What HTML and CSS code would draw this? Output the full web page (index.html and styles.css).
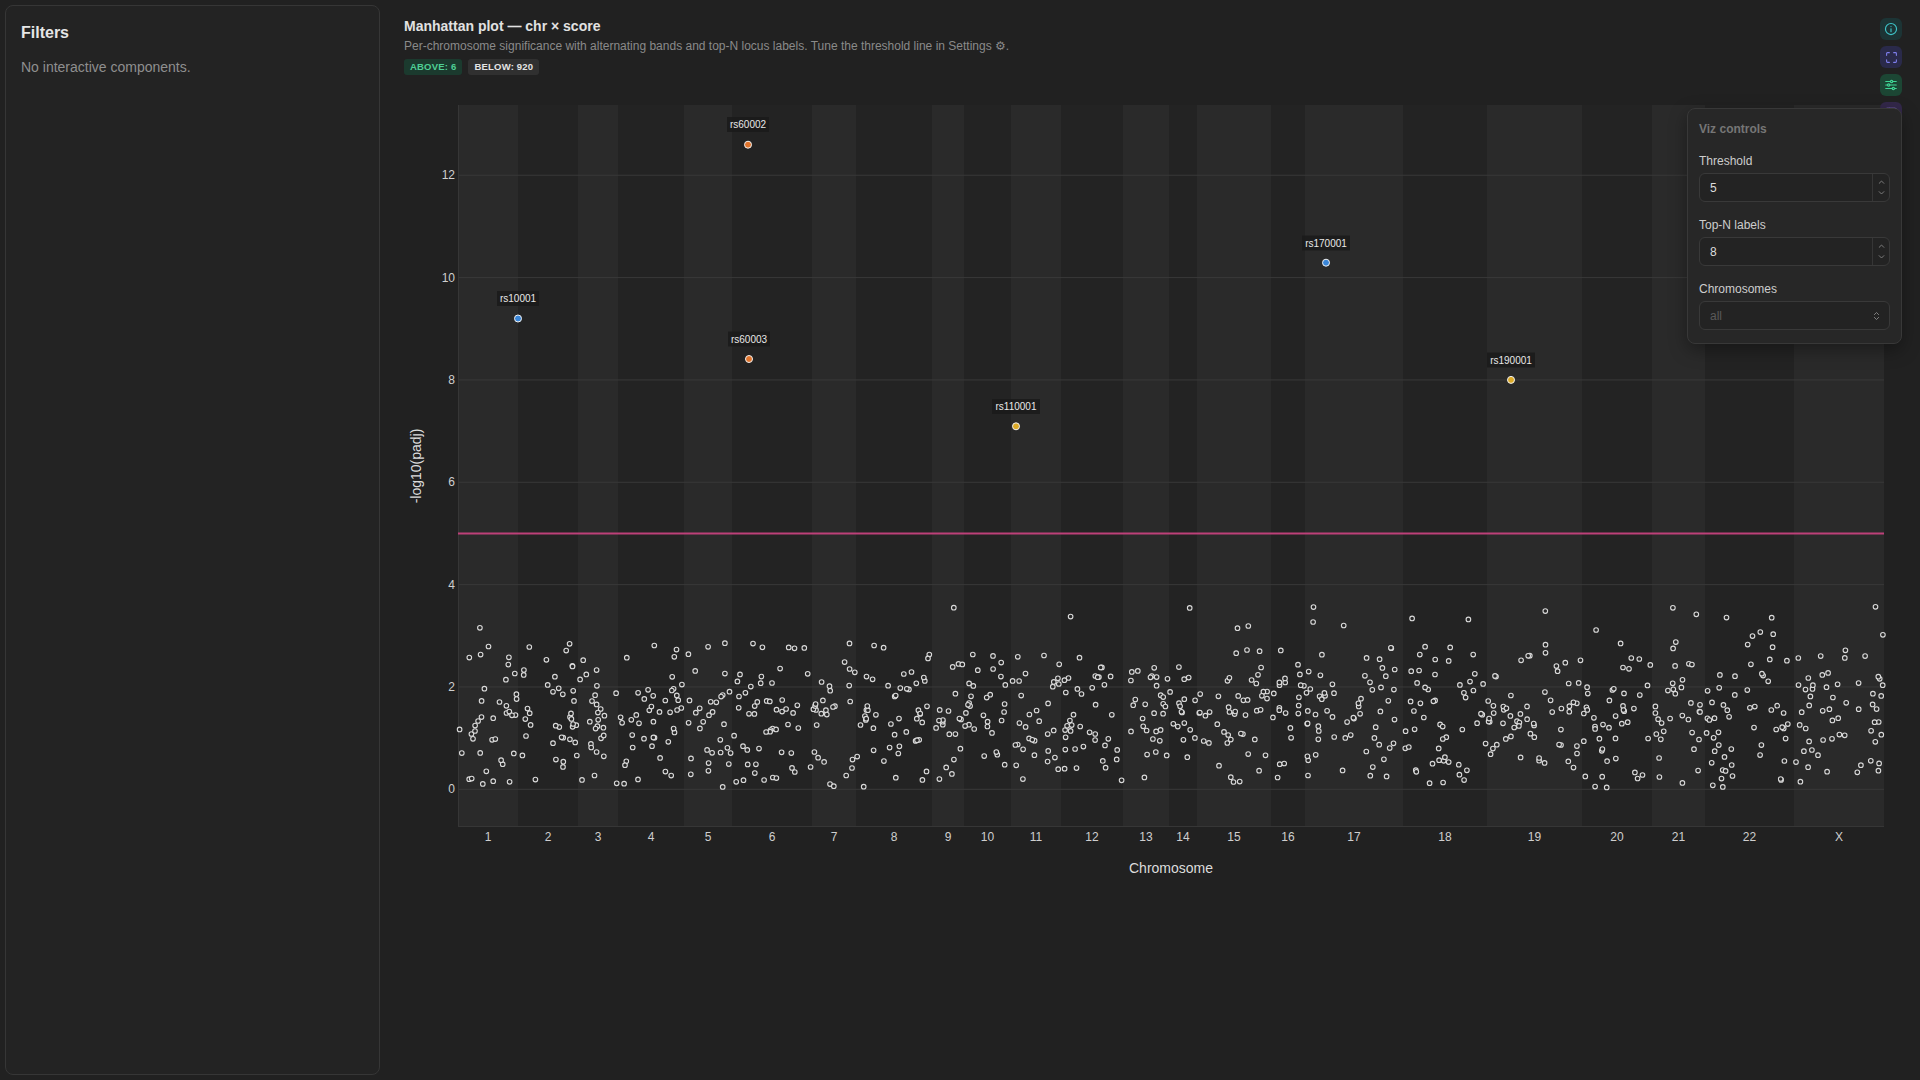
FILE: index.html
```html
<!DOCTYPE html>
<html lang="en">
<head>
<meta charset="utf-8">
<title>Manhattan plot</title>
<link rel="stylesheet" href="styles.css">
</head>
<body>
<div class="app">
  <aside class="sidebar">
    <h2 class="sidebar-title">Filters</h2>
    <p class="sidebar-empty">No interactive components.</p>
  </aside>

  <main class="main">
    <header class="viz-header">
      <h1 class="viz-title">Manhattan plot — chr × score</h1>
      <p class="viz-sub">Per-chromosome significance with alternating bands and top-N locus labels. Tune the threshold line in Settings ⚙.</p>
      <div class="badges">
        <span class="badge badge-above">ABOVE: 6</span>
        <span class="badge badge-below">BELOW: 920</span>
      </div>
    </header>

    <div class="chart">
      <svg class="plot" width="1500" height="800" viewBox="404 84 1500 800" xmlns="http://www.w3.org/2000/svg">
        <g class="bands">
          <rect class="band-a" x="458" y="105" width="60" height="722"/>
          <rect class="band-b" x="518" y="105" width="60" height="722"/>
          <rect class="band-a" x="578" y="105" width="40" height="722"/>
          <rect class="band-b" x="618" y="105" width="66" height="722"/>
          <rect class="band-a" x="684" y="105" width="48" height="722"/>
          <rect class="band-b" x="732" y="105" width="80" height="722"/>
          <rect class="band-a" x="812" y="105" width="44" height="722"/>
          <rect class="band-b" x="856" y="105" width="76" height="722"/>
          <rect class="band-a" x="932" y="105" width="32" height="722"/>
          <rect class="band-b" x="964" y="105" width="47" height="722"/>
          <rect class="band-a" x="1011" y="105" width="50" height="722"/>
          <rect class="band-b" x="1061" y="105" width="62" height="722"/>
          <rect class="band-a" x="1123" y="105" width="46" height="722"/>
          <rect class="band-b" x="1169" y="105" width="28" height="722"/>
          <rect class="band-a" x="1197" y="105" width="74" height="722"/>
          <rect class="band-b" x="1271" y="105" width="34" height="722"/>
          <rect class="band-a" x="1305" y="105" width="98" height="722"/>
          <rect class="band-b" x="1403" y="105" width="84" height="722"/>
          <rect class="band-a" x="1487" y="105" width="95" height="722"/>
          <rect class="band-b" x="1582" y="105" width="70" height="722"/>
          <rect class="band-a" x="1652" y="105" width="53" height="722"/>
          <rect class="band-b" x="1705" y="105" width="89" height="722"/>
          <rect class="band-a" x="1794" y="105" width="90" height="722"/>
        </g>
        <g class="grid">
          <line x1="458" x2="1884" y1="789.3" y2="789.3"/>
          <line x1="458" x2="1884" y1="686.96" y2="686.96"/>
          <line x1="458" x2="1884" y1="584.62" y2="584.62"/>
          <line x1="458" x2="1884" y1="482.28" y2="482.28"/>
          <line x1="458" x2="1884" y1="379.94" y2="379.94"/>
          <line x1="458" x2="1884" y1="277.6" y2="277.6"/>
          <line x1="458" x2="1884" y1="175.26" y2="175.26"/>
        </g>
        <g class="axis-lines">
          <line x1="458.5" x2="458.5" y1="105" y2="827"/>
          <line x1="458" x2="1884" y1="826.5" y2="826.5"/>
        </g>
        <g class="yticks">
          <text x="455" y="789.3">0</text>
          <text x="455" y="686.96">2</text>
          <text x="455" y="584.62">4</text>
          <text x="455" y="482.28">6</text>
          <text x="455" y="379.94">8</text>
          <text x="455" y="277.6">10</text>
          <text x="455" y="175.26">12</text>
        </g>
        <g class="xticks">
          <text x="488" y="837">1</text>
          <text x="548" y="837">2</text>
          <text x="598" y="837">3</text>
          <text x="651" y="837">4</text>
          <text x="708" y="837">5</text>
          <text x="772" y="837">6</text>
          <text x="834" y="837">7</text>
          <text x="894" y="837">8</text>
          <text x="948" y="837">9</text>
          <text x="987.5" y="837">10</text>
          <text x="1036" y="837">11</text>
          <text x="1092" y="837">12</text>
          <text x="1146" y="837">13</text>
          <text x="1183" y="837">14</text>
          <text x="1234" y="837">15</text>
          <text x="1288" y="837">16</text>
          <text x="1354" y="837">17</text>
          <text x="1445" y="837">18</text>
          <text x="1534.5" y="837">19</text>
          <text x="1617" y="837">20</text>
          <text x="1678.5" y="837">21</text>
          <text x="1749.5" y="837">22</text>
          <text x="1839" y="837">X</text>
        </g>
        <text class="axis-title" x="1171" y="868">Chromosome</text>
        <text class="axis-title" x="416" y="466" transform="rotate(-90 416 466)">-log10(padj)</text>

        <g id="pts" class="pts"></g>

        <line class="threshold" x1="458" x2="1884" y1="533.45" y2="533.45"/>

        <g class="hits">
          <circle class="hit-blue" cx="518" cy="318.5" r="3.5"/>
          <circle class="hit-orange" cx="748" cy="144.7" r="3.5"/>
          <circle class="hit-orange" cx="749" cy="359" r="3.5"/>
          <circle class="hit-yellow" cx="1016" cy="426.3" r="3.5"/>
          <circle class="hit-blue" cx="1326" cy="262.7" r="3.5"/>
          <circle class="hit-yellow" cx="1511" cy="379.9" r="3.5"/>
        </g>
        <g class="tags">
          <rect x="497" y="291" width="42" height="15"/>
          <text x="518" y="298.5">rs10001</text>
          <rect x="727" y="117" width="42" height="15"/>
          <text x="748" y="124.5">rs60002</text>
          <rect x="728" y="331.5" width="42" height="15"/>
          <text x="749" y="339">rs60003</text>
          <rect x="992" y="399" width="48" height="15"/>
          <text x="1016" y="406.5">rs110001</text>
          <rect x="1302" y="235.5" width="48" height="15"/>
          <text x="1326" y="243">rs170001</text>
          <rect x="1487" y="352.5" width="48" height="15"/>
          <text x="1511" y="360">rs190001</text>
        </g>
      </svg>
    </div>
  </main>

  <div class="toolbar">
    <button class="tool tool-info" aria-label="Info">
      <svg viewBox="0 0 24 24" width="14" height="14"><circle cx="12" cy="12" r="9.5"/><path d="M12 16.5v-5"/><path d="M12 7.8h.01"/></svg>
    </button>
    <button class="tool tool-expand" aria-label="Fullscreen">
      <svg viewBox="0 0 24 24" width="13" height="13"><path d="M3 8V4.5A1.5 1.5 0 0 1 4.5 3H8"/><path d="M16 3h3.5A1.5 1.5 0 0 1 21 4.5V8"/><path d="M21 16v3.5a1.5 1.5 0 0 1-1.5 1.5H16"/><path d="M8 21H4.5A1.5 1.5 0 0 1 3 19.5V16"/></svg>
    </button>
    <button class="tool tool-settings" aria-label="Settings">
      <svg viewBox="0 0 24 24" width="14" height="14"><path d="M3 6h8M15 6h6M3 12h3M10 12h11M3 18h11M18 18h3"/><circle cx="13" cy="6" r="2"/><circle cx="8" cy="12" r="2"/><circle cx="16" cy="18" r="2"/></svg>
    </button>
    <button class="tool tool-table" aria-label="Data">
      <svg viewBox="0 0 24 24" width="14" height="14"><rect x="3" y="4" width="18" height="16" rx="2"/><path d="M9 4v16M3 10h18"/></svg>
    </button>
  </div>

  <div class="popup">
    <div class="popup-title">Viz controls</div>
    <div class="field">
      <label class="field-label">Threshold</label>
      <div class="num">
        <span class="num-value">5</span>
        <span class="spin">
          <svg viewBox="0 0 10 6" width="7" height="4"><path d="M1.5 5L5 1.5 8.5 5"/></svg>
          <svg viewBox="0 0 10 6" width="7" height="4"><path d="M1.5 1L5 4.5 8.5 1"/></svg>
        </span>
      </div>
    </div>
    <div class="field">
      <label class="field-label">Top-N labels</label>
      <div class="num">
        <span class="num-value">8</span>
        <span class="spin">
          <svg viewBox="0 0 10 6" width="7" height="4"><path d="M1.5 5L5 1.5 8.5 5"/></svg>
          <svg viewBox="0 0 10 6" width="7" height="4"><path d="M1.5 1L5 4.5 8.5 1"/></svg>
        </span>
      </div>
    </div>
    <div class="field">
      <label class="field-label">Chromosomes</label>
      <div class="select">
        <span class="select-value">all</span>
        <svg viewBox="0 0 10 14" width="7" height="10"><path d="M2 5l3-3 3 3M2 9l3 3 3-3"/></svg>
      </div>
    </div>
  </div>
</div>
<script src="script.js"></script>
</body>
</html>
```

FILE: styles.css
```css
* { box-sizing: border-box; }
html, body { margin: 0; padding: 0; }
body {
  background: #212121;
  color: #e0e0e0;
  font-family: "Liberation Sans", Arial, "DejaVu Sans", sans-serif;
  width: 1920px;
  height: 1080px;
  overflow: hidden;
}
.app {
  display: flex;
  gap: 24px;
  padding: 5px;
  height: 1080px;
}
.sidebar {
  width: 375px;
  flex: none;
  background: #232323;
  border: 1px solid #363636;
  border-radius: 8px;
  padding: 17px 15px;
}
.sidebar-title {
  margin: 0;
  font-size: 16px;
  line-height: 20px;
  font-weight: 700;
  color: #e6e6e6;
}
.sidebar-empty {
  margin: 16px 0 0;
  font-size: 14px;
  line-height: 17px;
  color: #8f8f8f;
}
.main {
  flex: 1;
  padding-top: 12px;
  min-width: 0;
}
.viz-title {
  margin: 0;
  font-size: 14px;
  line-height: 18px;
  font-weight: 700;
  color: #e2e2e2;
}
.viz-sub {
  margin: 3px 0 0;
  font-size: 12px;
  line-height: 16px;
  color: #8a8a8a;
}
.badges {
  display: flex;
  gap: 6px;
  margin-top: 5px;
}
.badge {
  font-size: 9.5px;
  font-weight: 700;
  line-height: 16px;
  height: 16px;
  padding: 0 6px;
  border-radius: 3px;
  letter-spacing: 0.2px;
}
.badge-above { background: #1b3a2e; color: #4fcf95; }
.badge-below { background: #303030; color: #e4e4e4; }
.chart { margin-top: 9px; }
.plot { display: block; }
.band-a { fill: #2a2a2a; }
.band-b { fill: #232323; }
.grid line { stroke: #393939; stroke-width: 1; }
.axis-lines line { stroke: #363636; stroke-width: 1; }
.yticks text {
  font-size: 12px;
  fill: #cfcfcf;
  text-anchor: end;
  dominant-baseline: central;
}
.xticks text {
  font-size: 12px;
  fill: #cfcfcf;
  text-anchor: middle;
  dominant-baseline: central;
}
.axis-title {
  font-size: 14px;
  fill: #dcdcdc;
  text-anchor: middle;
  dominant-baseline: central;
}
.pts circle {
  fill: #262626;
  stroke: #dadada;
  stroke-width: 1.1;
}
.threshold { stroke: #bd4079; stroke-width: 2; }
.hits circle { stroke: #f2f2f2; stroke-width: 1; }
.hit-blue { fill: #3a86d8; }
.hit-orange { fill: #e0742c; }
.hit-yellow { fill: #dcaa28; }
.tags rect { fill: #1b1b1b; fill-opacity: 0.9; }
.tags text {
  font-size: 10px;
  fill: #e8e8e8;
  text-anchor: middle;
  dominant-baseline: central;
}

.toolbar {
  position: absolute;
  top: 18px;
  right: 18px;
  display: flex;
  flex-direction: column;
  gap: 6px;
}
.tool {
  width: 22px;
  height: 22px;
  border: none;
  border-radius: 6px;
  padding: 0;
  display: flex;
  align-items: center;
  justify-content: center;
}
.tool svg { fill: none; stroke-width: 2; stroke-linecap: round; stroke-linejoin: round; }
.tool-info { background: #1c3435; }
.tool-info svg { stroke: #3ec3c8; }
.tool-expand { background: #2a2a4a; }
.tool-expand svg { stroke: #7f7fee; }
.tool-settings { background: #1c4634; }
.tool-settings svg { stroke: #3fd696; }
.tool-table { background: #33284a; }
.tool-table svg { stroke: #9d7ff0; }

.popup {
  position: absolute;
  top: 108px;
  left: 1687px;
  width: 215px;
  height: 236px;
  background: #272727;
  border: 1px solid #383838;
  border-radius: 8px;
  padding: 12px 11px 11px;
  box-shadow: 0 6px 18px rgba(0,0,0,0.35);
  z-index: 2;
}
.popup-title {
  font-size: 12px;
  line-height: 16px;
  font-weight: 700;
  color: #767676;
  margin-bottom: 17px;
}
.field { display: flex; flex-direction: column; gap: 4px; }
.field + .field { margin-top: 16px; }
.field-label {
  font-size: 12px;
  line-height: 15px;
  color: #cdcdcd;
}
.num, .select {
  height: 29px;
  border: 1px solid #393939;
  border-radius: 6px;
  background: #232323;
  display: flex;
  align-items: center;
}
.num-value {
  flex: 1;
  padding-left: 10px;
  font-size: 12px;
  color: #dddddd;
}
.spin {
  width: 17px;
  height: 100%;
  border-left: 1px solid #363636;
  display: flex;
  flex-direction: column;
  align-items: center;
  justify-content: center;
  gap: 7px;
}
.spin svg, .select svg { fill: none; stroke: #8a8a8a; stroke-width: 1.3; stroke-linecap: round; stroke-linejoin: round; }
.select { justify-content: space-between; padding: 0 9px 0 10px; }
.select-value { font-size: 12px; color: #5a5a5a; }
```

FILE: script.js
```js
(function () {
  var B = [458,518,578,618,684,732,812,856,932,964,1011,1061,1123,1169,1197,1271,1305,1403,1487,1582,1652,1705,1794,1884];
  var Y0 = 789.3, K = 51.17, TOTAL = 920, W = B[B.length - 1] - B[0];
  var seed = 20240611;
  function rnd() {
    seed |= 0; seed = seed + 0x6D2B79F5 | 0;
    var t = Math.imul(seed ^ seed >>> 15, 1 | seed);
    t = t + Math.imul(t ^ t >>> 7, 61 | t) ^ t;
    return ((t ^ t >>> 14) >>> 0) / 4294967296;
  }
  var out = [];
  var made = 0;
  for (var i = 0; i < B.length - 1; i++) {
    var w = B[i + 1] - B[i];
    var n = i === B.length - 2 ? TOTAL - made : Math.round(w / W * TOTAL);
    made += n;
    for (var j = 0; j < n; j++) {
      var x = B[i] + 1 + rnd() * (w - 2);
      var r = rnd();
      var v;
      if (r < 0.45) v = 0.02 + rnd() * 2.85;
      else if (r < 0.97) v = 0.15 + 2.6 * ((rnd() + rnd()) / 2);
      else v = 2.8 + rnd() * 0.8;
      var y = Y0 - v * K;
      out.push('<circle cx="' + x.toFixed(1) + '" cy="' + y.toFixed(1) + '" r="2.3"/>');
    }
  }
  document.getElementById('pts').innerHTML = out.join('');
})();
```
